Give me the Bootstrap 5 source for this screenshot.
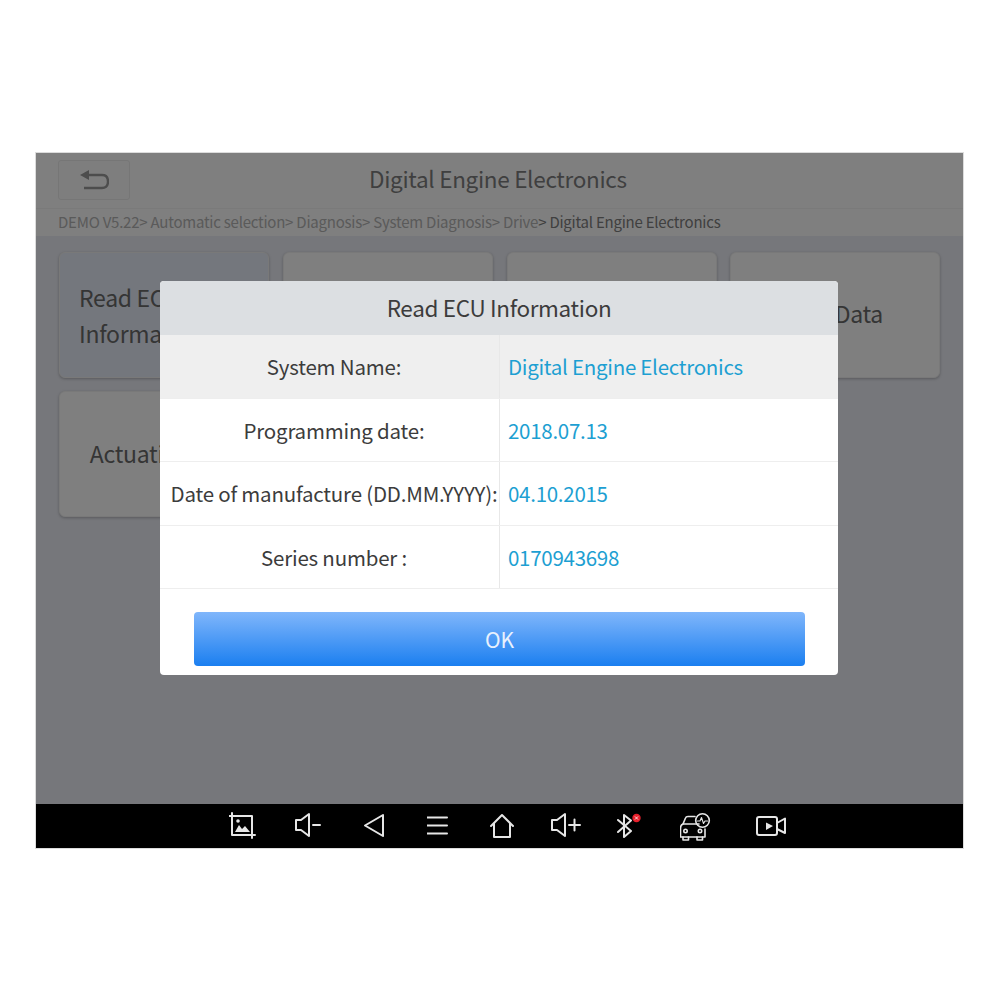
<!doctype html>
<html lang="en">
  <head>
    <meta charset="UTF-8" />
    <meta name="viewport" content="width=device-width, initial-scale=1" />
    <title>Read ECU Information</title>
    <link href="https://cdn.jsdelivr.net/npm/bootstrap@5.3.0/dist/css/bootstrap.min.css" rel="stylesheet" />
    <style>
      body {
        background: #fff;
        font-family: "Noto Sans CJK SC", "Noto Sans", sans-serif;
        padding: 152px 36px 0 35px;
      }
      /* tablet screen */
      .tablet-screen {
        width: 929px;
        border: 1px solid #dcdcdc;
        position: relative;
      }
      .app-area {
        height: 651px;
        background: #eceef6;
      }
      .app-header {
        height: 56px;
        background: #fff;
        border-bottom: 1px solid #f4f4f4;
        padding: 0 0 0 22px;
      }
      .back-btn {
        width: 72px;
        height: 40px;
        margin-top: 7px;
        border: 1px solid #ececec;
        border-radius: 3px;
        background: #fdfdfd;
      }
      .app-title {
        font-size: 22.5px;
        letter-spacing: -0.3px;
        color: #7e7e80;
        margin-left: 239px;
        line-height: 51px;
      }
      .crumbs {
        height: 27px;
        line-height: 25px;
        background: #fff;
        padding-left: 22px;
        font-size: 15px;
        letter-spacing: -0.23px;
        color: #b4b4b4;
      }
      .crumbs b {
        font-weight: 400;
        color: #808080;
      }
      .tile-grid {
        display: grid;
        grid-template-columns: repeat(4, 210px);
        grid-auto-rows: 125.5px;
        gap: 13.75px;
        padding: 16px 0 0 23px;
      }
      .tile {
        background: #fff;
        border: 1px solid #f2f2f2;
        border-radius: 6px;
        box-shadow: 0 1px 3px rgba(0, 0, 0, 0.25);
        font-size: 23px;
        letter-spacing: -0.3px;
        line-height: 36px;
        color: #6a6a6a;
        padding-bottom: 3px;
      }
      .tile-on {
        background: #e8eefa;
        text-align: left;
        padding: 0 0 0 19px;
      }
      .dim-layer {
        position: absolute;
        left: 0;
        right: 0;
        top: 0;
        height: 651px;
        background: rgba(0, 0, 0, 0.5);
      }
      /* dialog */
      .ecu-dialog {
        position: absolute;
        left: 124px;
        top: 128px;
        width: 678px;
        height: 394px;
        border: 0;
        border-radius: 4px;
        overflow: hidden;
        background: #fff;
      }
      .ecu-head {
        height: 54px;
        background: #dcdfe2;
        font-size: 22.5px;
        letter-spacing: -0.33px;
        line-height: 52px;
        color: #3c3c3c;
      }
      .ecu-row {
        height: 63.6px;
        border-bottom: 1px solid #eeeeee;
        font-size: 20.5px;
        flex-wrap: nowrap;
      }
      .ecu-row-first {
        background: #efefef;
      }
      .ecu-label {
        width: 340px;
        color: #3c3c3c;
        letter-spacing: -0.2px;
        padding-left: 9px;
        border-right: 1px solid #e8e8e8;
        white-space: nowrap;
      }
      .ecu-value {
        width: 338px;
        color: #1d9fd2;
        letter-spacing: -0.27px;
        padding-left: 8px;
      }
      .ok-btn {
        display: block;
        width: 611px;
        height: 54px;
        margin: 23px 0 0 34px;
        padding-bottom: 6px;
        border: 0;
        border-radius: 4px;
        background: linear-gradient(#80b6fb, #1b7ff0);
        color: #e8f1fd;
        font-size: 21px;
      }
      /* android nav bar */
      .nav-strip {
        height: 44px;
        background: #000;
        padding-left: 193px;
      }
      .nav-strip svg {
        fill: none;
        stroke: #e6e6e6;
        stroke-width: 2;
        stroke-linejoin: round;
        stroke-linecap: round;
        display: block;
        flex: none;
      }
    </style>
  </head>
  <body>
    <div class="tablet-screen">
      <div class="app-area">
        <div class="app-header d-flex">
          <div class="back-btn d-flex align-items-center justify-content-center">
            <svg width="30" height="22" viewBox="0 0 30 22" fill="none" stroke="#9a9a9a" stroke-width="2.4">
              <path d="M1 6 10 1V11Z" fill="#9a9a9a" stroke="none" />
              <path d="M9 6H23Q29 6 29 12.5 29 19 23 19H5" />
            </svg>
          </div>
          <div class="app-title">Digital Engine Electronics</div>
        </div>
        <div class="crumbs">DEMO V5.22&gt; Automatic selection&gt; Diagnosis&gt; System Diagnosis&gt; Drive<b>&gt; Digital Engine Electronics</b></div>
        <div class="tile-grid">
          <div class="tile tile-on d-flex align-items-center">Read ECU<br />Information</div>
          <div class="tile"></div>
          <div class="tile"></div>
          <div class="tile d-flex align-items-center justify-content-center">Live Data</div>
          <div class="tile d-flex align-items-center justify-content-center">Actuation Test</div>
        </div>
      </div>
      <div class="dim-layer"></div>

      <div class="card ecu-dialog">
        <div class="ecu-head text-center">Read ECU Information</div>
        <div class="d-flex ecu-row ecu-row-first">
          <div class="ecu-label d-flex align-items-center justify-content-center">System Name:</div>
          <div class="ecu-value d-flex align-items-center">Digital Engine Electronics</div>
        </div>
        <div class="d-flex ecu-row">
          <div class="ecu-label d-flex align-items-center justify-content-center">Programming date:</div>
          <div class="ecu-value d-flex align-items-center">2018.07.13</div>
        </div>
        <div class="d-flex ecu-row">
          <div class="ecu-label d-flex align-items-center justify-content-center">Date of manufacture (DD.MM.YYYY):</div>
          <div class="ecu-value d-flex align-items-center">04.10.2015</div>
        </div>
        <div class="d-flex ecu-row">
          <div class="ecu-label d-flex align-items-center justify-content-center">Series number :</div>
          <div class="ecu-value d-flex align-items-center">0170943698</div>
        </div>
        <button type="button" class="btn ok-btn">OK</button>
      </div>

      <div class="nav-strip d-flex align-items-center">
        <!-- screenshot -->
        <svg width="66" height="30" viewBox="0 0 66 30">
          <path d="M3 2V24H26M23 27V5H0" />
          <path d="M6 21 10 14 13 18 16 15 21 21Z" fill="#e6e6e6" stroke="none" />
          <circle cx="9" cy="10" r="1.8" fill="#e6e6e6" stroke="none" />
        </svg>
        <!-- volume down -->
        <svg width="68" height="30" viewBox="0 0 68 30">
          <path d="M1 9H6L14 3V25L6 19H1Z" />
          <path d="M18 14H25" />
        </svg>
        <!-- back -->
        <svg width="64" height="30" viewBox="0 0 64 30">
          <path d="M20 4 2 14.5 20 25Z" />
        </svg>
        <!-- recents -->
        <svg width="63" height="30" viewBox="0 0 63 30">
          <path d="M0 6.5H20M0 14.5H20M0 22.5H20" />
        </svg>
        <!-- home -->
        <svg width="61" height="30" viewBox="0 0 61 30">
          <path d="M1 15 12 4 23 15M4 12.5V26H20V12.5" />
        </svg>
        <!-- volume up -->
        <svg width="66" height="30" viewBox="0 0 66 30">
          <path d="M1 9H6L14 3V25L6 19H1Z" />
          <path d="M18 14H29M23.5 8.5V19.5" />
        </svg>
        <!-- bluetooth -->
        <svg width="63" height="30" viewBox="0 0 63 30">
          <path d="M1 9 14 20 7 26V4L14 9.5 1 21" />
          <circle cx="19.5" cy="7" r="4.2" fill="#e8202c" stroke="none" />
          <path d="M18.2 5.7 20.8 8.3M20.8 5.7 18.2 8.3" stroke="#fff" stroke-width="0.8" />
        </svg>
        <!-- car check -->
        <svg width="76" height="30" viewBox="0 0 76 30" style="stroke-width: 1.6">
          <path d="M15 5.5H8Q6 5.5 5.5 7L3 13Q0.5 14 0.5 17V26H25V18" />
          <path d="M3 13H19M3 26V29H8.5V26M17 26V29H22.5V26" />
          <circle cx="5.5" cy="20" r="1.7" />
          <circle cx="20" cy="20" r="1.7" />
          <circle cx="22.5" cy="9.5" r="6.8" />
          <path d="M17.5 10H20L21.5 6.5 23.5 12.5 25 10H27.5" stroke-width="1.1" />
        </svg>
        <!-- screen record -->
        <svg width="32" height="30" viewBox="0 0 32 30">
          <rect x="1" y="6" width="20" height="18" rx="2" />
          <path d="M21 12 29 7.5V22L21 18" />
          <path d="M10 11.5 17 15 10 19Z" fill="#e6e6e6" stroke="none" />
        </svg>
      </div>
    </div>

    <script src="https://cdn.jsdelivr.net/npm/bootstrap@5.3.0/dist/js/bootstrap.bundle.min.js"></script>
  </body>
</html>
